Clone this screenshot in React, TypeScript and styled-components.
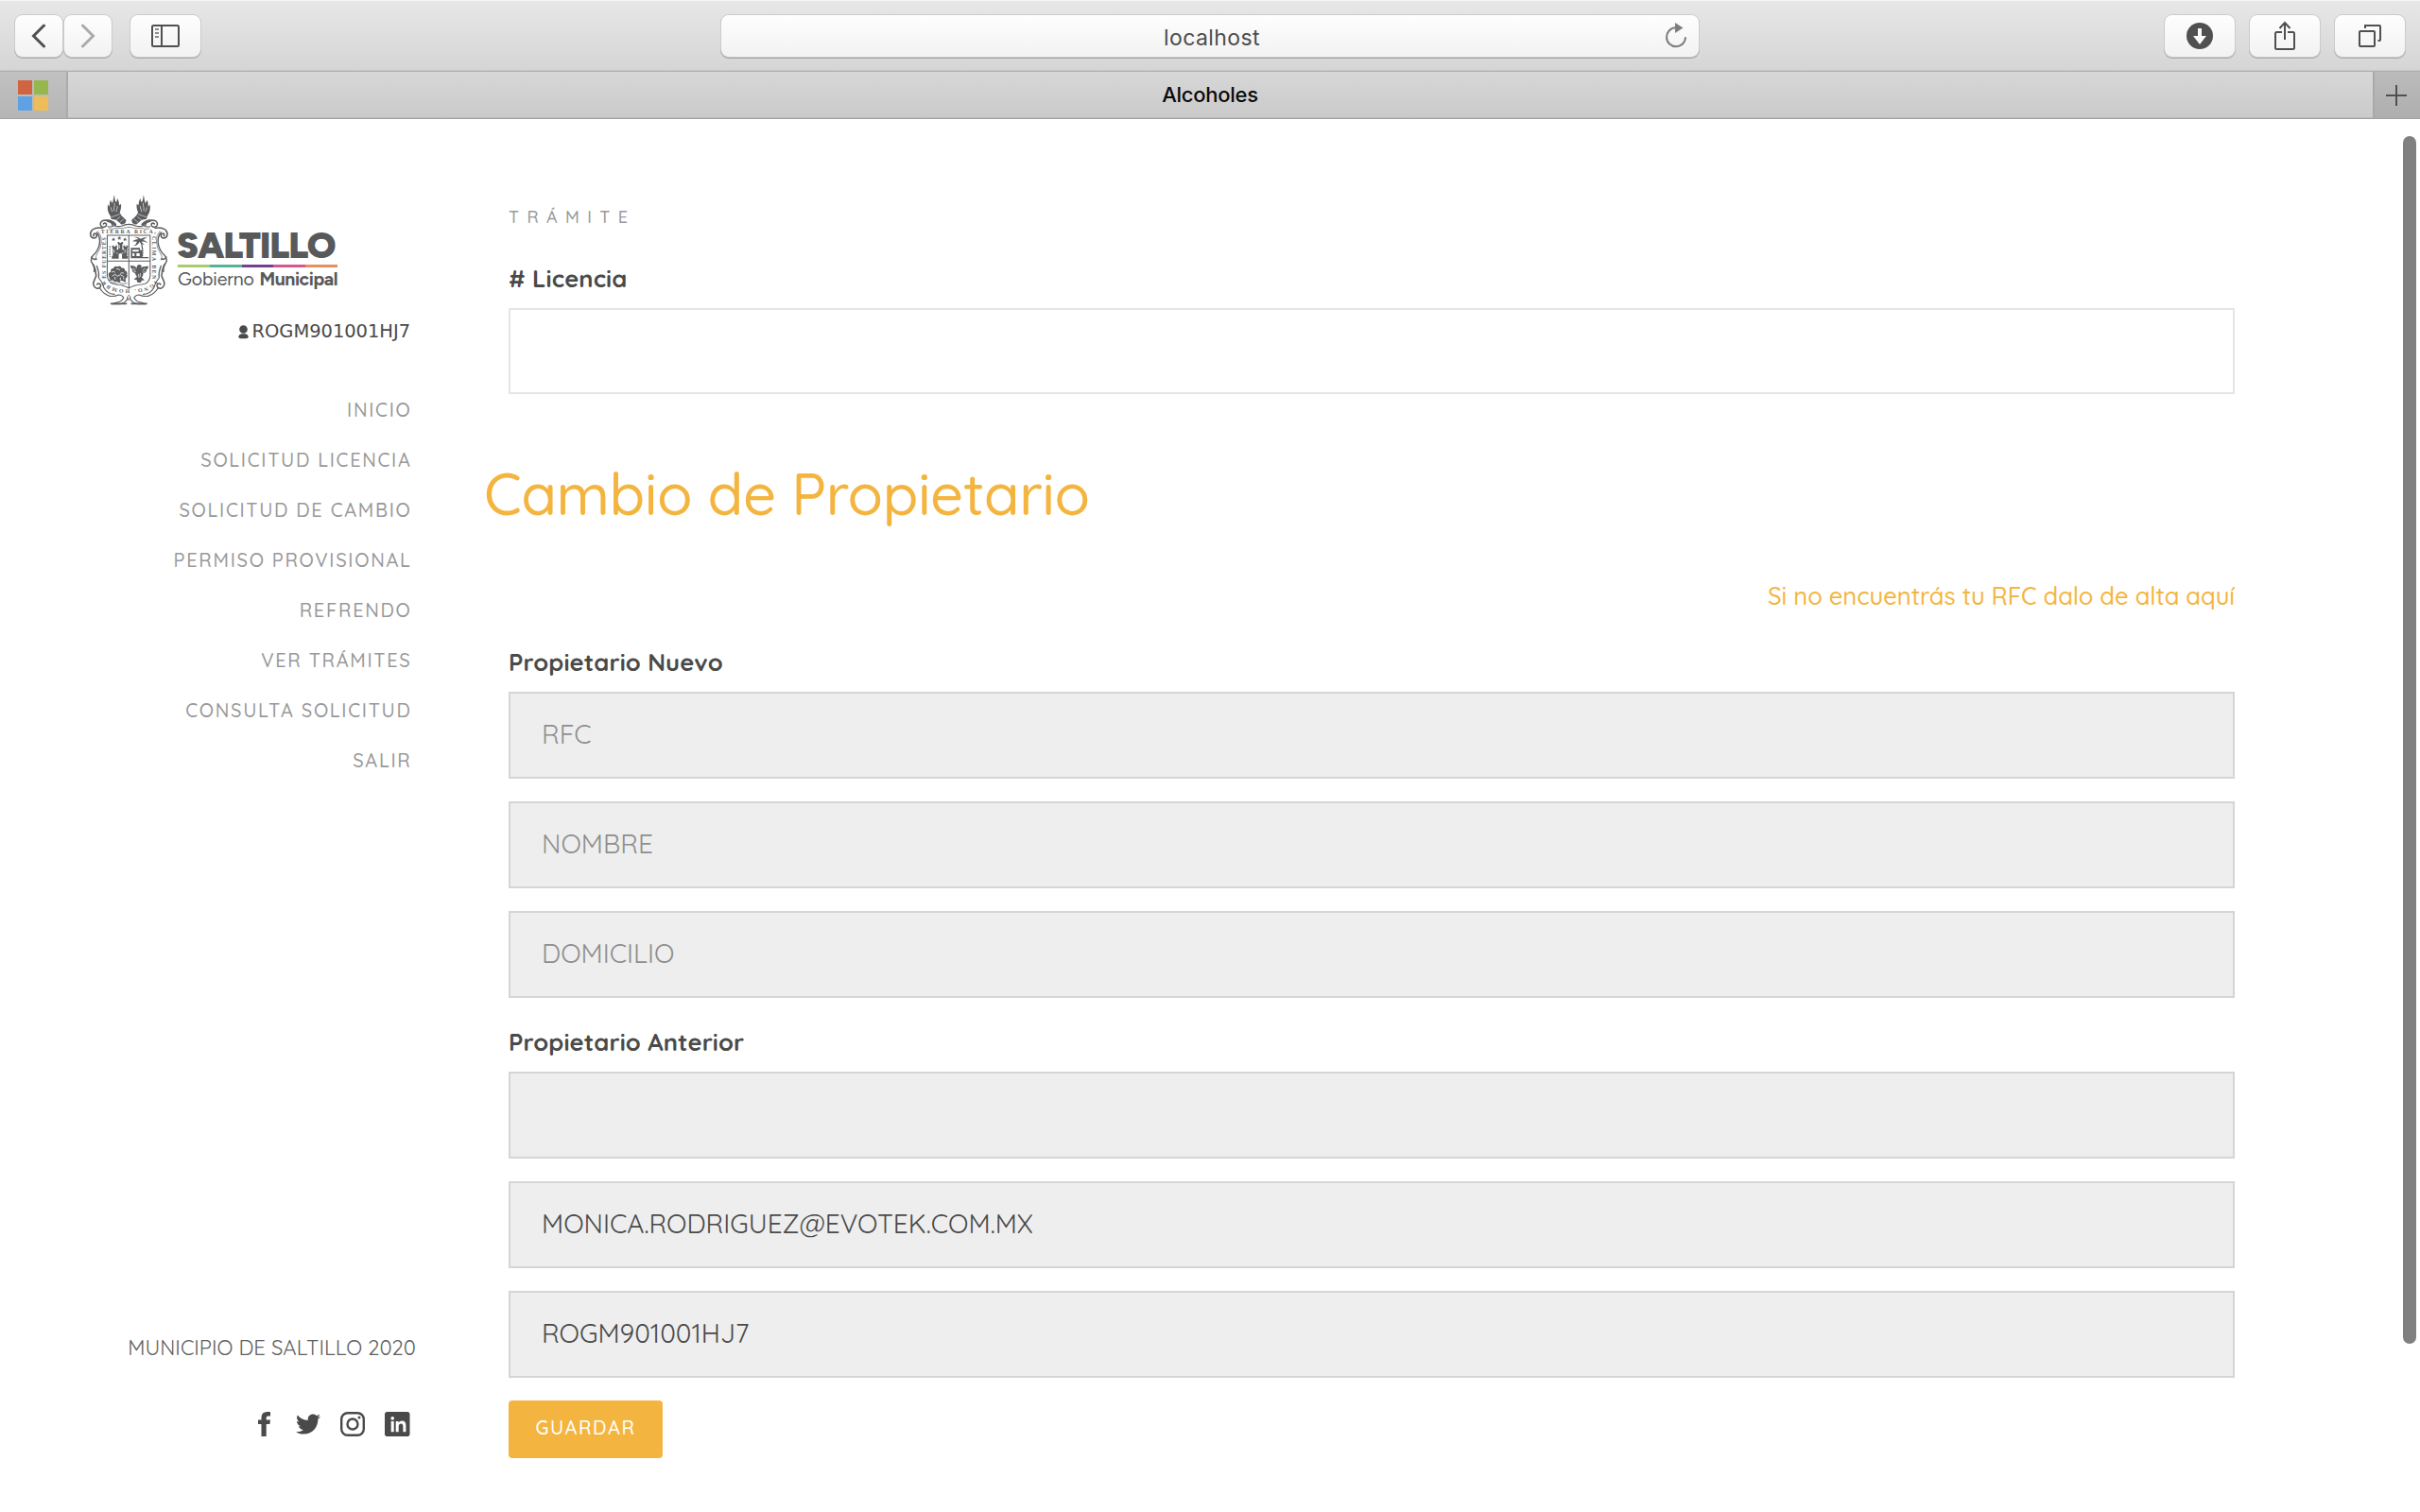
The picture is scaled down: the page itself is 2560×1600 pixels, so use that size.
import React from "react";
import styled, { createGlobalStyle } from "styled-components";
import { FaTwitter } from "react-icons/fa";

const ink = "#4a4a4a";
const muted = "#999999";
const accent = "#f4b540";

const GlobalStyle = createGlobalStyle`
  * { box-sizing: border-box; }
  body {
    margin: 0;
    background: #fff;
    font-family: Quicksand, Lato, "Open Sans", sans-serif;
    color: ${ink};
    overflow: hidden;
  }
`;

const Screen = styled.div`
  display: flex;
  flex-direction: column;
  width: 2560px;
  height: 1600px;
  position: relative;
  overflow: hidden;
`;

/* Browser chrome */
const Toolbar = styled.header`
  display: grid;
  grid-template-columns: 1fr 1034px 1fr;
  align-items: center;
  height: 76px;
  padding: 0 16px;
  background: linear-gradient(#e7e7e7, #d5d5d5);
  border-top: 1px solid #f6f6f6;
  border-bottom: 1px solid #aeaeae;
  box-shadow: inset 0 -1px #c9c9c9;
`;

const ButtonGroup = styled.div<{ $end?: boolean }>`
  display: flex;
  justify-content: ${(p) => (p.$end ? "flex-end" : "flex-start")};
  gap: ${(p) => (p.$end ? 16 : 2)}px;
`;

const ToolButton = styled.button<{ $width?: number; $before?: number }>`
  display: flex;
  align-items: center;
  justify-content: center;
  width: ${(p) => p.$width ?? 74}px;
  height: 44px;
  margin: 0 0 0 ${(p) => p.$before ?? 0}px;
  padding: 0;
  border: 0;
  border-radius: 8px;
  background: linear-gradient(#fefefe, #f2f2f2);
  box-shadow: 0 0 0 1px #cbcbcb, 0 1px 0 1px #a9a9a9;
`;

const AddressBar = styled.div`
  display: grid;
  grid-template-columns: 40px 1fr 40px;
  align-items: center;
  height: 44px;
  border-radius: 8px;
  background: linear-gradient(#fefefe, #f2f2f2);
  box-shadow: 0 0 0 1px #cbcbcb, 0 1px 0 1px #a0a0a0;
  svg { margin-left: 4px; }
`;

const Address = styled.span`
  grid-column: 2;
  text-align: center;
  font: 400 23px/36px Inter, sans-serif;
  letter-spacing: 0.4px;
  padding: 3px 0 0 4px;
  color: #4d4d4d;
`;

const TabBar = styled.div`
  display: grid;
  grid-template-columns: 72px 1fr 50px;
  height: 50px;
  background: linear-gradient(#d7d7d7, #cacaca);
  border-bottom: 1px solid #a2a2a2;
  box-shadow: inset 0 -1px #bababa;
`;

const PinnedTab = styled.div`
  display: flex;
  align-items: center;
  padding-left: 19px;
  background: linear-gradient(#c1c1c1, #b5b5b5);
  border-right: 2px solid #ababab;
`;

const PinnedTiles = styled.div`
  display: grid;
  grid-template-columns: 15px 15px;
  grid-template-rows: 15px 15px;
  gap: 2px;
`;

const Tile = styled.i<{ $color: string }>`
  background: ${(p) => p.$color};
`;

const TabTitle = styled.div`
  text-align: center;
  padding-right: 22px;
  font: 500 22px/48px Inter, sans-serif;
  letter-spacing: -0.26px;
  color: #0a0a0a;
`;

const NewTab = styled.div`
  display: flex;
  align-items: center;
  justify-content: center;
  padding: 1px 2px 0 0;
  background: linear-gradient(#bbbbbb, #aeaeae);
  border-left: 2px solid #a9a9a9;
`;

const ScrollThumb = styled.div`
  position: absolute;
  top: 144px;
  right: 4px;
  width: 14px;
  height: 1278px;
  border-radius: 7px;
  background: #808080;
`;

/* Page */
const Page = styled.div`
  display: grid;
  grid-template-columns: 434px 1826px;
  column-gap: 104px;
  height: 1474px;
`;

const Sidebar = styled.aside`
  display: flex;
  flex-direction: column;
  align-items: flex-end;
  padding-top: 74px;
`;

const Brand = styled.div`
  display: flex;
  align-self: stretch;
  height: 130px;
  padding-left: 90px;
`;

const Wordmark = styled.div`
  width: 169px;
  margin: 37px 0 0 3px;
  white-space: nowrap;
  color: #58595b;
`;

const City = styled.div`
  height: 43px;
  margin-left: -1px;
  font: 900 38.5px/45px Figtree, Lato, sans-serif;
  letter-spacing: -1.3px;
`;

const Stripe = styled.div`
  display: grid;
  grid-template-columns: repeat(5, 1fr);
  height: 3px;
`;

const Band = styled.i<{ $color: string }>`
  background: ${(p) => p.$color};
`;

const Office = styled.div`
  display: flex;
  justify-content: space-between;
  font: 400 19.5px/25px Figtree, Lato, sans-serif;
  letter-spacing: -0.1px;
  b {
    font-weight: 700;
    letter-spacing: -0.45px;
  }
`;

const User = styled.div`
  display: flex;
  align-items: center;
  gap: 4px;
  margin-top: 7px;
  font: 400 19.5px/28px "DejaVu Sans", sans-serif;
  letter-spacing: -0.05px;
`;

const Nav = styled.nav`
  display: flex;
  flex-direction: column;
  align-items: flex-end;
  margin-top: 42px;
`;

const NavLink = styled.a`
  font-size: 20px;
  font-weight: 500;
  line-height: 53px;
  letter-spacing: 1.68px;
  margin-right: -1.5px;
  color: ${muted};
`;

const Footer = styled.footer`
  margin-top: 580px;
  display: flex;
  flex-direction: column;
  align-items: flex-end;
`;

const Copyright = styled.div`
  margin-right: -6px;
  font-size: 22.1px;
  line-height: 30px;
  color: #606060;
`;

const Social = styled.div`
  display: flex;
  gap: 21px;
  margin: 52px 1px 0 0;
`;

const SocialLink = styled.a`
  display: flex;
  align-items: center;
  justify-content: center;
  width: 26px;
  height: 27px;
  color: ${ink};
  svg { flex: none; }
`;

const Main = styled.main`
  display: flex;
  flex-direction: column;
  align-items: stretch;
  padding-top: 92px;
`;

const Overline = styled.div`
  font-size: 18px;
  font-weight: 500;
  line-height: 24px;
  letter-spacing: 8.4px;
  color: ${muted};
`;

const Label = styled.label<{ $above: number }>`
  margin-top: ${(p) => p.$above}px;
  font-size: 25.6px;
  font-weight: 700;
  line-height: 32px;
  letter-spacing: 0.1px;
`;

const Field = styled.input<{ $first?: boolean }>`
  height: 92px;
  margin: ${(p) => (p.$first ? 16 : 24)}px 0 0;
  padding: 0 33px 3px;
  border: 2px solid #e5e5e5;
  border-radius: 0;
  outline: 0;
  background: #fff;
  font: 400 28px Quicksand, Lato, sans-serif;
  color: #4a4a4a;
  &:enabled { height: 91px; }
  &::placeholder { color: #8e8e8e; opacity: 1; }
  &:disabled {
    background: #eee;
    border-color: #d5d5d5;
  }
`;

const Title = styled.h1`
  margin: 67px 0 0 -26px;
  font-size: 61.6px;
  font-weight: 500;
  line-height: 76px;
  letter-spacing: -0.48px;
  color: ${accent};
`;

const Hint = styled.a`
  align-self: flex-end;
  margin-top: 54px;
  font-size: 25.6px;
  font-weight: 500;
  line-height: 32px;
  letter-spacing: -0.04px;
  color: ${accent};
`;

const Submit = styled.button`
  align-self: flex-start;
  width: 163px;
  height: 61px;
  margin-top: 24px;
  padding: 0 0 4px;
  border: 0;
  border-radius: 4px;
  background: ${accent};
  color: #fff;
  font: 500 20px Quicksand, Lato, sans-serif;
  letter-spacing: 1.6px;
`;

const stroke = { fill: "none", stroke: "#505050", strokeWidth: 2 } as const;

const Chevron = ({ flip }: { flip?: boolean }) => (
  <svg width="16" height="26" viewBox="0 0 16 26" fill="none" stroke={flip ? "#ababab" : "#505050"} strokeWidth="3" strokeLinecap="round">
    <path d={flip ? "M2.5 2 13.5 13 2.5 24" : "M13.5 2 2.5 13l11 11"} />
  </svg>
);

const SidebarIcon = () => (
  <svg width="30" height="24" viewBox="0 0 30 24" {...stroke}>
    <rect x="1" y="1" width="28" height="22" rx="1.5" />
    <path d="M11 1v22" />
    <path d="M4 5h4M4 9h4M4 13h4" stroke="#8c8c8c" />
  </svg>
);

const ReloadIcon = () => (
  <svg width="24" height="28" viewBox="0 0 24 28">
    <path d="M11.5 5.3A10 10 0 1 0 22 15.3" fill="none" stroke="#7d7d7d" strokeWidth="2" />
    <path d="M11 0v11l8.5-5.5z" fill="#7d7d7d" />
  </svg>
);

const DownloadIcon = () => (
  <svg width="28" height="28" viewBox="0 0 28 28">
    <circle cx="14" cy="14" r="14" fill="#505050" />
    <path d="M12 6h4v8h5l-7 9-7-9h5z" fill="#fafafa" />
  </svg>
);

const ShareIcon = () => (
  <svg width="24" height="32" viewBox="0 0 24 32" {...stroke}>
    <path d="M9 12H3.5Q2 12 2 13.500V28.500Q2 30 3.500 30H20.500Q22 30 22 28.500V13.500Q22 12 20.500 12H15" />
    <path d="M12 20V2M6.500 8 12 2l5.500 6" />
  </svg>
);

const WindowsIcon = () => (
  <svg width="24" height="24" viewBox="0 0 24 24" {...stroke}>
    <rect x="1" y="7" width="16" height="16" rx="1" />
    <path d="M7 4V1H22Q23 1 23 2V16Q23 17 22 17H20.500" />
  </svg>
);

const FacebookIcon = () => (
  <svg width="13" height="26" viewBox="0 0 13 26" fill={ink}>
    <path d="M3.500 26V13H0V8.500h3.500V6.300Q3.500 0 9.500 0H13v4.500h-2.600q-1.700 0-1.700 1.700V8.500H13L12.400 13H8.700v13z" />
  </svg>
);

const InstagramIcon = () => (
  <svg width="26" height="26" viewBox="0 0 26 26" fill="none" stroke={ink} strokeWidth="2.4">
    <rect x="1.200" y="1.200" width="23.600" height="23.600" rx="6.500" />
    <circle cx="13" cy="13" r="5.500" />
    <circle cx="20" cy="6" r="1.500" fill={ink} stroke="none" />
  </svg>
);

const LinkedinIcon = () => (
  <svg width="27" height="26" viewBox="0 0 27 26">
    <rect width="26.500" height="26" rx="2.800" fill={ink} />
    <g fill="#fff">
      <circle cx="8.200" cy="6.900" r="1.800" />
      <path d="M6.700 10h3v11.300h-3zM11.700 10h2.900v1.600q1.200-2 3.700-2q4.100 0 4.100 4.700v7h-3v-6.200q0-2.700-2-2.700q-2.700 0-2.700 3v5.900h-3z" />
    </g>
  </svg>
);

const UserIcon = () => (
  <svg width="11" height="15" viewBox="0 0 11 15" fill={ink}>
    <circle cx="5.500" cy="4.500" r="4.300" />
    <path d="M.3 12.300Q.6 9.800 3.500 9.300H7.500Q10.400 9.800 10.700 12.300Q10.500 14.300 8.500 14.300H2.500Q.5 14.300 .3 12.300z" />
  </svg>
);

const Torch = () => (
  <g transform="translate(4 0)">
    <path d="M93 19C96 30 94 36 99 42C102 38 103 34 102 29C109 38 107 46 109 52L114 47C116 60 112 70 108 79L84 88C73 76 72 62 74 49L79 56C80 46 78 42 83 35C84 40 86 43 88 44C91 36 91 28 93 19z" />
    <path d="M94 44C96 54 90 60 93 70M83 58Q84 66 88 72M103 54C104 62 99 65 100 73" fill="none" stroke="#fff" strokeWidth="1.800" />
    <path d="M81 80l27-9l7 13l15 15l-3 10l-11 4l-17-15l-15-3z" />
    <path d="M85 89l25-9M100 98l12-10M110 106l12-10" stroke="#fff" strokeWidth="1.600" />
  </g>
);

const FrameHalf = () => (
  <g fill="none" stroke="#5c5d5f" strokeWidth="3.400" strokeLinecap="round">
    {/* top ribbon and upper scroll */}
    <path d="M142 112Q128 112 122 117Q108 121 97 116Q86 122 78 119" />
    <path d="M142 121Q120 127 104 124Q92 128 80 126" strokeWidth="2" />
    <path d="M92 115Q88 100 72 99Q56 99 55 111Q56 121 66 121Q75 119 73 111Q69 105 64 111" strokeWidth="4.500" />
    <path d="M100 113Q92 103 78 101" strokeWidth="8" />
    {/* left scroll */}
    <path d="M62 124Q42 121 31 129Q21 140 27 152Q36 160 43 152Q46 143 38 141Q32 143 35 149" strokeWidth="4.500" />
    <path d="M44 138Q54 151 53 168Q52 187 40 203Q26 214 27 230L33 241Q38 250 36 262" strokeWidth="4" />
    <path d="M48 134Q60 148 58 168Q56 188 47 202Q38 213 42 225" strokeWidth="2" />
    <path d="M28 216Q32 226 43 222M34 240Q42 258 42 276Q38 286 34 296Q32 311 45 316Q57 315 56 304Q50 296 45 303" strokeWidth="4.500" />
    <path d="M44 244Q52 264 50 282Q62 296 66 314Q78 334 98 334" />
    <path d="M54 316Q64 334 84 340Q100 342 110 336Q122 336 126 346Q118 360 102 361L90 365H116Q134 360 139 346" />
    <path d="M88 364H134" strokeWidth="5" />
    <path d="M142 337Q134 341 138 348Q142 353 142 353" strokeWidth="2.400" />
  </g>
);

const Crest = () => (
  <svg width="95" height="130" viewBox="0 0 285 390" fill="#5c5d5f">
    <defs>
      <path id="m-top" d="M57 141H226" />
      <path id="m-right" d="M214 150V288" />
      <path id="m-bottom" d="M221 291Q208 318 142 319Q84 320 66 290" />
      <path id="m-left" d="M71 284V152" />
    </defs>
    <g transform="translate(139 0) scale(1.04 1) translate(-142 0)">
      <Torch />
      <g transform="translate(284 0) scale(-1 1)"><Torch /></g>
      <FrameHalf />
      <g transform="translate(284 0) scale(-1 1)"><FrameHalf /></g>
      <g fontFamily="Liberation Serif, serif" fontWeight="700" fontSize="17">
        <text><textPath href="#m-top" textLength="167">TIERRA RICA,</textPath></text>
        <text><textPath href="#m-right" textLength="136">CLIMA BEN</textPath></text>
        <text><textPath href="#m-bottom" textLength="172">IGNO. HOMBR</textPath></text>
        <text><textPath href="#m-left" textLength="130">ES FUERTES</textPath></text>
      </g>
      {/* quartered shield */}
      <path d="M76 147H207V276Q205 300 182 303Q158 304 142 315Q126 304 102 303Q79 300 76 276zM142 147V313M76 229H207" fill="none" stroke="#5c5d5f" strokeWidth="3" />
      {/* castle */}
      <path d="M90 221v-9h3v-24h-2v-9h5v4h5v-4h5v9h-1v5h5v-18h-2v-7h5v3h6v-3h5v7h-2v18h5v-5h-2v-9h5v4h4v-4h4v9h-2v24h3v9h-18v-13q-5-8-10 0v13z" />
      <path d="M97 193v9M113 178v10M130 193v9M104 204h4M120 204h5" stroke="#fff" strokeWidth="2.500" />
      <path d="M95 154l2 4h4l-3 3l1 4l-4-2l-4 2l1-4l-3-3h4zM113 150l2 4h4l-3 3l1 4l-4-2l-4 2l1-4l-3-3h4zM130 154l2 4h4l-3 3l1 4l-4-2l-4 2l1-4l-3-3h4z" />
      <path d="M84 181v34M138 181v34" stroke="#5c5d5f" strokeWidth="3" strokeDasharray="5 3" />
      {/* tree over the house */}
      <path d="M152 166q12-7 20-7q-8-6-14-6q12-2 20 5q8-5 20-5q-8 4-13 9q10 2 16 10q-12-7-21-5l10 11q-11-3-16-10q-4 12-18 13q8-4 11-14z" />
      <path d="M178 165q8 23 5 50M148 218h54" fill="none" stroke="#5c5d5f" strokeWidth="3.500" />
      <path d="M148 187h28v7h6v22h-34zm5 6v6h19v-6zm0 11v9h6v-9zm12 0v9h10v-9z" fillRule="evenodd" />
      {/* grove */}
      <path d="M80 275q-2-11 7-12q-2-12 8-11q3-10 12-5q9-6 13 4q10-2 10 8q9 3 6 12q4 8-4 13v13q-8-7-15-6l-3 6l-8-4l-9 2l-3-8l-8 4z" />
      <path d="M90 264q6-5 10 1M104 254q7-3 11 4M116 268q6-5 11 0M91 277l9-6l7 6l9-5l10 6M100 288v-9M116 290v-9M126 287v-7" fill="none" stroke="#fff" strokeWidth="2.400" />
      <path d="M80 289q17-2 30 7t27 3M87 296q13 0 21 6" fill="none" stroke="#5c5d5f" strokeWidth="2" />
      {/* eagle */}
      <path d="M146 244q14-3 20 8q-1-12 9-12q6 1 6 6l-4 5q7-7 25-6q-1 9-8 14l3 1q-5 7-11 8q0 9-5 12l9 10h-9l-2 7h-11l-2-8l-9-2l10-9q-5-4-6-11q-8-2-10-8l4-2q-8-4-9-13z" />
      <path d="M154 251l9 7M155 260l8 3M193 252l-10 7M191 262l-7 3M171 270l2 12M177 267l-1 12" stroke="#fff" strokeWidth="2" />
    </g>
  </svg>
);

const navItems = [
  "INICIO",
  "SOLICITUD LICENCIA",
  "SOLICITUD DE CAMBIO",
  "PERMISO PROVISIONAL",
  "REFRENDO",
  "VER TRÁMITES",
  "CONSULTA SOLICITUD",
  "SALIR",
];

export default function App() {
  return (
    <Screen>
      <GlobalStyle />
      <Toolbar>
        <ButtonGroup>
          <ToolButton $width={50}><Chevron /></ToolButton>
          <ToolButton $width={50}><Chevron flip /></ToolButton>
          <ToolButton $before={18}><SidebarIcon /></ToolButton>
        </ButtonGroup>
        <AddressBar>
          <Address>localhost</Address>
          <ReloadIcon />
        </AddressBar>
        <ButtonGroup $end>
          <ToolButton><DownloadIcon /></ToolButton>
          <ToolButton><ShareIcon /></ToolButton>
          <ToolButton><WindowsIcon /></ToolButton>
        </ButtonGroup>
      </Toolbar>
      <TabBar>
        <PinnedTab>
          <PinnedTiles>
            <Tile $color="#d06442" />
            <Tile $color="#95b74e" />
            <Tile $color="#5ea2e3" />
            <Tile $color="#ecbd58" />
          </PinnedTiles>
        </PinnedTab>
        <TabTitle>Alcoholes</TabTitle>
        <NewTab>
          <svg width="22" height="22" viewBox="0 0 22 22" {...stroke}><path d="M11 0v22M0 11h22" /></svg>
        </NewTab>
      </TabBar>

      <Page>
        <Sidebar>
          <Brand>
            <Crest />
            <Wordmark>
              <City>SALTILLO</City>
              <Stripe>
                <Band $color="#a9cb6b" />
                <Band $color="#56b396" />
                <Band $color="#73408f" />
                <Band $color="#d6568d" />
                <Band $color="#e5915a" />
              </Stripe>
              <Office>Gobierno <b>Municipal</b></Office>
            </Wordmark>
          </Brand>
          <User><UserIcon />ROGM901001HJ7</User>
          <Nav>
            {navItems.map((text) => (
              <NavLink key={text}>{text}</NavLink>
            ))}
          </Nav>
          <Footer>
            <Copyright>MUNICIPIO DE SALTILLO 2020</Copyright>
            <Social>
              <SocialLink><FacebookIcon /></SocialLink>
              <SocialLink><FaTwitter size={26} /></SocialLink>
              <SocialLink><InstagramIcon /></SocialLink>
              <SocialLink><LinkedinIcon /></SocialLink>
            </Social>
          </Footer>
        </Sidebar>

        <Main>
          <Overline>TRÁMITE</Overline>
          <Label $above={36}># Licencia</Label>
          <Field $first />
          <Title>Cambio de Propietario</Title>
          <Hint>Si no encuentrás tu RFC dalo de alta aquí</Hint>
          <Label $above={38}>Propietario Nuevo</Label>
          <Field disabled placeholder="RFC" $first />
          <Field disabled placeholder="NOMBRE" />
          <Field disabled placeholder="DOMICILIO" />
          <Label $above={30}>Propietario Anterior</Label>
          <Field disabled $first />
          <Field disabled value="MONICA.RODRIGUEZ@EVOTEK.COM.MX" />
          <Field disabled value="ROGM901001HJ7" />
          <Submit>GUARDAR</Submit>
        </Main>
      </Page>
      <ScrollThumb />
    </Screen>
  );
}
